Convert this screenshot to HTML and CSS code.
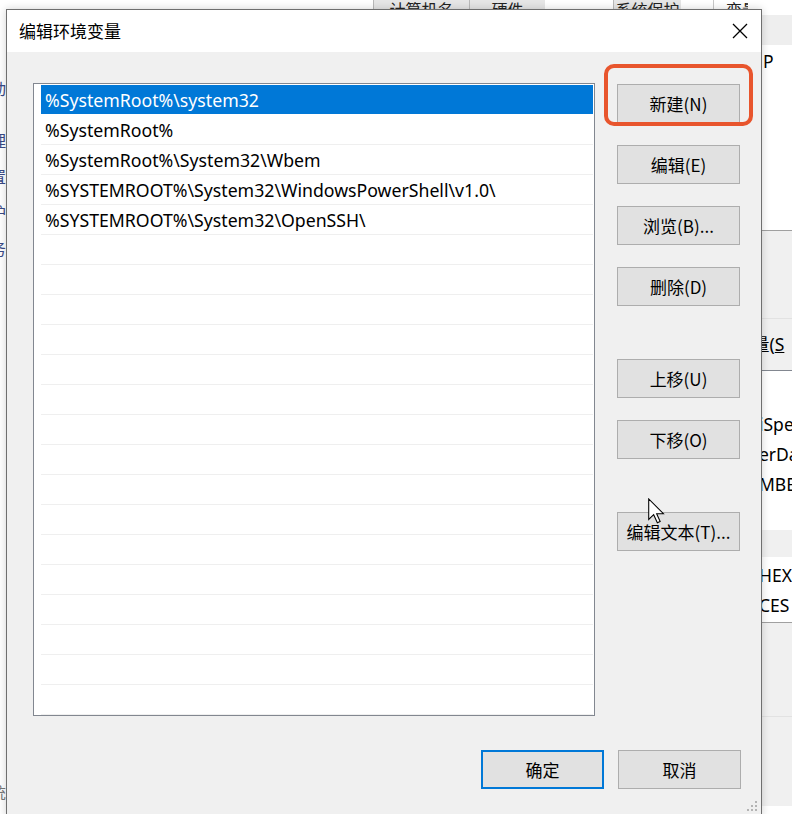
FILE: index.html
```html
<!DOCTYPE html>
<html lang="zh-CN">
<head>
<meta charset="utf-8">
<title>编辑环境变量</title>
<link rel="stylesheet" href="styles.css">
</head>
<body>
<div class="bg-tabs">
  <div class="tab blank w13"></div>
  <div class="tab gray w96"><span>计算机名</span></div>
  <div class="tab gray w76"><span>硬件</span></div>
  <div class="tab blank w68"></div>
  <div class="tab gray w68"><span>系统保护</span></div>
  <div class="tab blank w32"></div>
  <div class="tab head"><span>变量</span></div>
</div>

<div class="bg-left">
  <span class="lk lk1">动</span>
  <span class="lk lk2">理</span>
  <span class="lk lk3">置</span>
  <span class="lk lk3">护</span>
  <span class="lk lk3">务</span>
  <span class="lk lk4">统</span>
</div>

<div class="bg-right">
  <div class="band white h15"></div>
  <div class="band light h30"></div>
  <div class="band white h185 pt6"><span class="bt">P</span></div>
  <div class="band gray h88 topline"></div>
  <div class="band gray h52 topfaint"><span class="bt mid">量(<u>S</u></span></div>
  <div class="band white h160 listline">
    <span class="bt row30">iSpe</span>
    <span class="bt row30">erDa</span>
    <span class="bt row30">MBE</span>
  </div>
  <div class="band gray h27"></div>
  <div class="band white h65 pt3">
    <span class="bt row30">HEX</span>
    <span class="bt row30">CES</span>
  </div>
  <div class="band gray h94 topline"></div>
  <div class="band gray h90 topfaint"></div>
</div>

<div class="dialog">
  <div class="titlebar">
    <span class="title">编辑环境变量</span>
    <svg class="close" width="16" height="16" viewBox="0 0 16 16" aria-hidden="true">
      <path d="M1 1 L15 15 M15 1 L1 15" stroke="#000" stroke-width="1.3" fill="none"/>
    </svg>
  </div>
  <div class="body">
    <div class="main">
      <div class="list">
        <div class="row sel">%SystemRoot%\system32</div>
        <div class="row">%SystemRoot%</div>
        <div class="row">%SystemRoot%\System32\Wbem</div>
        <div class="row">%SYSTEMROOT%\System32\WindowsPowerShell\v1.0\</div>
        <div class="row">%SYSTEMROOT%\System32\OpenSSH\</div>
        <div class="row"></div><div class="row"></div><div class="row"></div>
        <div class="row"></div><div class="row"></div><div class="row"></div>
        <div class="row"></div><div class="row"></div><div class="row"></div>
        <div class="row"></div><div class="row"></div><div class="row"></div>
        <div class="row"></div><div class="row"></div><div class="row"></div>
        <div class="row"></div><div class="row"></div>
      </div>
      <div class="side">
        <div class="btn marked">新建(N)<span class="mark"></span></div>
        <div class="btn">编辑(E)</div>
        <div class="btn">浏览(B)...</div>
        <div class="btn">删除(D)</div>
        <div class="btn sep">上移(U)</div>
        <div class="btn">下移(O)</div>
        <div class="btn sep">编辑文本(T)...</div>
      </div>
    </div>
    <div class="footer">
      <div class="btn default">确定</div>
      <div class="btn">取消</div>
    </div>
    <svg class="grip" width="12" height="12" viewBox="0 0 12 12" aria-hidden="true">
      <rect x="9" y="1" width="2" height="2" fill="#b4b4b4"/>
      <rect x="5" y="5" width="2" height="2" fill="#b4b4b4"/>
      <rect x="9" y="5" width="2" height="2" fill="#b4b4b4"/>
      <rect x="1" y="9" width="2" height="2" fill="#b4b4b4"/>
      <rect x="5" y="9" width="2" height="2" fill="#b4b4b4"/>
      <rect x="9" y="9" width="2" height="2" fill="#b4b4b4"/>
    </svg>
  </div>
</div>

<svg class="cursor" width="17" height="26" viewBox="0 0 12 18" aria-hidden="true">
  <path d="M0.5 0.5 V15 L4 11.6 L6.6 17.3 L8.6 16.4 L6.1 10.9 H10.9 Z" fill="#fff" stroke="#000" stroke-width="0.75" stroke-linejoin="miter"/>
</svg>
</body>
</html>
```

FILE: styles.css
```css
* { box-sizing: border-box; }
html, body { margin: 0; padding: 0; }
body {
  width: 792px;
  height: 814px;
  overflow: hidden;
  position: relative;
  background: #fff;
  font-family: "Noto Sans", "Noto Sans CJK SC", sans-serif;
  color: #000;
}

/* ---------- background window (behind the dialog) ---------- */
.bg-tabs {
  position: absolute;
  left: 360px;
  top: 0;
  width: 432px;
  height: 9px;
  display: flex;
  overflow: hidden;
  font-family: "Noto Sans CJK SC", sans-serif;
  font-size: 16px;
  color: #222;
}
.tab {
  height: 9px;
  display: flex;
  align-items: flex-end;
  justify-content: center;
  overflow: hidden;
  flex: none;
}
.tab span { line-height: 18px; margin-bottom: -9px; white-space: nowrap; }
.tab.gray { background: #e6e6e6; border-left: 1px solid #b9b9b9; }
.tab.blank { background: #fff; }
.tab.head { flex: 1; border-left: 1px solid #c8c8c8; justify-content: flex-start; padding-left: 12px; background: #fff; }
.w13 { width: 13px; }
.w96 { width: 96px; }
.w76 { width: 76px; }
.w68 { width: 68px; }
.w32 { width: 32px; }

.bg-left {
  position: absolute;
  left: 0;
  top: 0;
  width: 6px;
  height: 814px;
  overflow: hidden;
  display: flex;
  flex-direction: column;
  padding-top: 78px;
  font-family: "Noto Sans CJK SC", sans-serif;
  font-size: 16px;
  line-height: 20px;
  color: #3a4a86;
}
.lk { display: block; margin-left: -10px; white-space: nowrap; }
.lk2 { margin-top: 32px; }
.lk3 { margin-top: 16px; }
.lk4 { margin-top: 524px; color: #777; }

.bg-right {
  position: absolute;
  left: 748px;
  top: 0;
  width: 44px;
  height: 814px;
  display: flex;
  flex-direction: column;
  overflow: hidden;
  font-size: 17.5px;
  line-height: 20px;
}
.band { flex: none; display: flex; flex-direction: column; padding-left: 11px; white-space: nowrap; }
.band.white { background: #fff; }
.band.light { background: #eeeeee; }
.band.gray { background: #f0f0f0; }
.topline { border-top: 1px solid #a0a0a0; }
.topfaint { border-top: 1px solid #e2e2e2; }
.listline { border-top: 1px solid #828790; padding-top: 38px; }
.h15 { height: 15px; }
.h30 { height: 30px; }
.h185 { height: 185px; }
.h88 { height: 88px; }
.h52 { height: 52px; }
.h160 { height: 160px; }
.h27 { height: 27px; }
.h65 { height: 65px; }
.h94 { height: 94px; }
.h90 { height: 90px; }
.pt6 { padding-top: 6px; padding-left: 15px; }
.pt3 { padding-top: 3px; }
.bt { display: block; }
.bt.mid { margin-top: 15px; font-family: "Noto Sans", "Noto Sans CJK SC", sans-serif; padding-left: 0; margin-left: -7px; }
.row30 { height: 30px; line-height: 30px; }

/* ---------- dialog ---------- */
.dialog {
  position: absolute;
  left: 6px;
  top: 9px;
  width: 756px;
  height: 808px;
  border: 1px solid #6f6f6f;
  background: #f0f0f0;
  box-shadow: 0 0 8px rgba(0, 0, 0, 0.18);
  display: flex;
  flex-direction: column;
  z-index: 2;
}
.titlebar {
  flex: none;
  height: 42px;
  background: #fff;
  display: flex;
  align-items: center;
  justify-content: space-between;
  padding: 0 13px 0 12px;
}
.title {
  font-family: "Noto Sans CJK SC", sans-serif;
  font-size: 17px;
  line-height: 20px;
}
.close { display: block; }

.body {
  flex: 1;
  position: relative;
  padding: 31px 20px 0 26px;
  display: flex;
  flex-direction: column;
}
.main { display: flex; }

.list {
  flex: none;
  width: 562px;
  height: 633px;
  border: 1px solid #828790;
  background: #fff;
  padding: 1px 1px 0 7px;
  overflow: hidden;
}
.row {
  height: 30px;
  border-bottom: 1px solid #efefef;
  padding-left: 4px;
  display: flex;
  align-items: center;
  font-size: 17.7px;
  white-space: nowrap;
}
.row.sel {
  background: #0078d7;
  color: #fff;
  border-bottom-color: #fff;
}

.side {
  flex: none;
  margin-left: 22px;
  width: 123px;
  padding-top: 1px;
  display: flex;
  flex-direction: column;
  gap: 22px;
}
.btn {
  height: 39px;
  background: #e1e1e1;
  border: 1px solid #adadad;
  display: flex;
  align-items: center;
  justify-content: center;
  font-family: "Noto Sans CJK SC", sans-serif;
  font-size: 17px;
  white-space: nowrap;
}
.side .sep { margin-top: 31px; }
.marked { position: relative; }
.mark {
  position: absolute;
  left: -14px;
  right: -14px;
  top: -21px;
  bottom: -4px;
  border: 4px solid #e8552d;
  border-radius: 10px;
}

.footer {
  margin-top: 34px;
  display: flex;
  justify-content: flex-end;
  gap: 14px;
}
.footer .btn { width: 123px; }
.btn.default { border: 2px solid #0078d7; }

.grip {
  position: absolute;
  right: 3px;
  bottom: 4px;
}

.cursor {
  position: absolute;
  left: 648px;
  top: 498px;
  z-index: 5;
}
```
